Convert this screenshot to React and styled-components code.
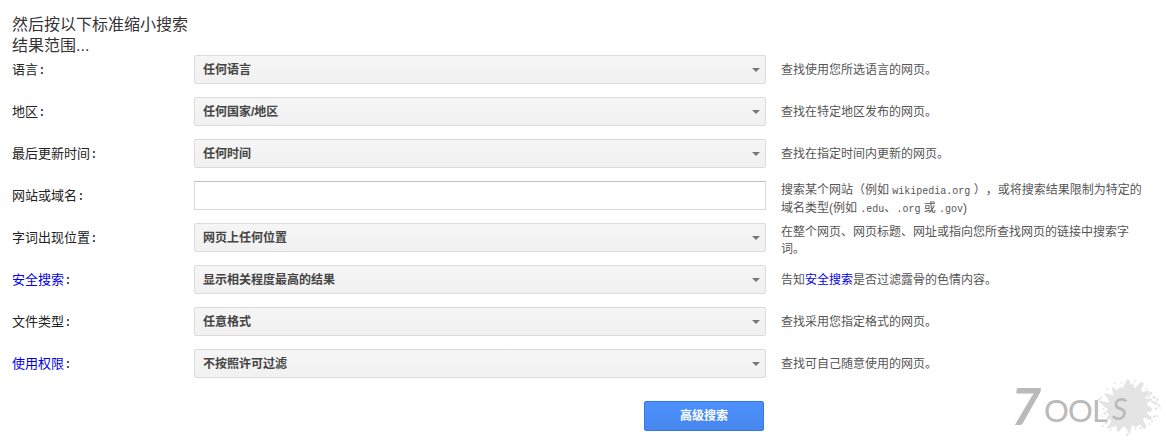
import React from 'react';
import styled, { createGlobalStyle } from 'styled-components';

const GlobalStyle = createGlobalStyle`
    * {
        box-sizing: border-box;
    }
    body {
        margin: 0;
        background: #fff;
        color: #222;
        font-family: 'Liberation Sans', 'Noto Sans CJK SC', sans-serif;
        font-size: 13px;
        text-spacing-trim: space-all;
    }
    a {
        color: #00e;
        text-decoration: none;
    }
`;

const Page = styled.main`
    position: relative;
    min-height: 100vh;
    padding: 14px 16px 8px 12px;
`;

const Heading = styled.h1`
    width: 182px;
    margin: 0;
    font-size: 16px;
    font-weight: 400;
    line-height: 21px;
    color: #333;
`;

const Row = styled.div`
    display: grid;
    grid-template-columns: 182px minmax(0, 572px) minmax(0, 1fr);
    align-items: start;
    min-height: 42px;
`;

const Form = styled.form`
    margin-top: -1px;
`;

const Label = styled.label`
    line-height: 29px;
    color: #222;
`;

const Colon = styled.span`
    font-family: 'Liberation Mono', monospace;
`;

const Help = styled.p`
    display: flex;
    align-items: center;
    min-height: 30px;
    margin: 0;
    padding: 1px 0 0 15px;
    font-size: 12px;
    line-height: 17px;
    color: #555;
`;

const Mono = styled.span`
    font-family: 'Liberation Mono', monospace;
    font-size: 10px;
`;

const SelectWrap = styled.div`
    display: grid;
    align-items: center;

    & > * {
        grid-area: 1 / 1;
    }
`;

const Select = styled.select`
    appearance: none;
    width: 100%;
    height: 29px;
    padding: 0 24px 0 8px;
    border: 1px solid #dcdcdc;
    border-radius: 2px;
    background: linear-gradient(#f5f5f5, #f1f1f1);
    color: #444;
    font-family: inherit;
    font-size: 12px;
    font-weight: 700;
`;

const Arrow = styled.svg`
    justify-self: end;
    width: 8px;
    height: 4px;
    margin-right: 6px;
    fill: #777;
    pointer-events: none;
`;

const TextInput = styled.input`
    width: 100%;
    height: 29px;
    padding: 1px 8px;
    border: 1px solid #d9d9d9;
    border-top-color: #c0c0c0;
    border-radius: 1px;
    font-family: inherit;
    font-size: 13px;
`;

const Actions = styled(Row)`
    padding-top: 10px;
`;

const Submit = styled.button`
    grid-column: 2;
    justify-self: end;
    width: 120px;
    height: 30px;
    margin-right: 2px;
    padding: 0;
    border: 1px solid #3079ed;
    border-radius: 2px;
    background: linear-gradient(#4d90fe, #4787ed);
    color: #fff;
    font-family: inherit;
    font-size: 12px;
    font-weight: 700;
    line-height: 28px;
    cursor: pointer;
`;

const Watermark = styled.svg`
    position: absolute;
    right: 0;
    bottom: 0;
    width: 160px;
    height: 72px;
    pointer-events: none;
`;

const fields = [
    { id: 'lang', label: '语言', value: '任何语言', help: '查找使用您所选语言的网页。' },
    { id: 'region', label: '地区', value: '任何国家/地区', help: '查找在特定地区发布的网页。' },
    { id: 'updated', label: '最后更新时间', value: '任何时间', help: '查找在指定时间内更新的网页。' },
    {
        id: 'site',
        label: '网站或域名',
        help: (
            <>
                搜索某个网站（例如 <Mono>wikipedia.org</Mono> ），或将搜索结果限制为特定的域名类型(例如 <Mono>.edu</Mono>、
                <Mono>.org</Mono> 或 <Mono>.gov</Mono>)
            </>
        ),
    },
    {
        id: 'place',
        label: '字词出现位置',
        value: '网页上任何位置',
        help: '在整个网页、网页标题、网址或指向您所查找网页的链接中搜索字词。',
    },
    {
        id: 'safe',
        label: '安全搜索',
        link: true,
        value: '显示相关程度最高的结果',
        help: (
            <>
                告知<a href="#safe">安全搜索</a>是否过滤露骨的色情内容。
            </>
        ),
    },
    { id: 'filetype', label: '文件类型', value: '任意格式', help: '查找采用您指定格式的网页。' },
    { id: 'rights', label: '使用权限', link: true, value: '不按照许可过滤', help: '查找可自己随意使用的网页。' },
];

const drops = [
    [182, 52, 5], [176, 60, 4], [192, 64, 5], [201, 72, 4], [196, 82, 5], [206, 88, 4], [211, 96, 2],
    [198, 98, 4], [188, 78, 4], [182, 72, 4], [204, 66, 2], [170, 38, 3], [192, 122, 4], [200, 120, 3],
    [196, 132, 2], [186, 134, 3], [178, 144, 3], [40, 98, 3], [44, 112, 4], [36, 120, 3], [48, 142, 4],
    [40, 150, 3], [74, 22, 3], [94, 20, 3], [134, 16, 3], [52, 40, 3], [34, 62, 3], [28, 70, 4],
    [62, 162, 3], [112, 176, 4], [136, 158, 3], [152, 156, 4], [164, 156, 3],
];

const Field = ({ id, label, link, value, help }) => (
    <Row>
        <Label htmlFor={id}>
            {link ? <a href={`#${id}`}>{label}</a> : label}
            <Colon>:</Colon>
        </Label>
        {value ? (
            <SelectWrap>
                <Select id={id} name={id}>
                    <option>{value}</option>
                </Select>
                <Arrow viewBox="0 0 8 4">
                    <path d="M0 0h8L4 4z" />
                </Arrow>
            </SelectWrap>
        ) : (
            <TextInput id={id} name={id} type="text" />
        )}
        <Help>
            <span>{help}</span>
        </Help>
    </Row>
);

const Logo = () => (
    <Watermark viewBox="0 0 160 72" role="img" aria-label="7ools">
        <g fill="#e4e4e4" transform="translate(84 7) scale(.3333)">
            <path
                stroke="#e4e4e4"
                strokeWidth="5"
                strokeLinejoin="round"
                d="M92 36l9 2 6-13 6-13 5 5-1 16 10-8 5 15 8-5 14-15 5 4-9 17 7 10 18-5-3 9-11 10 5 6 17-2-15 12 3 10 14 8-3 6-17 2 3 5 16 14-5 4-17-9-6 9 3 7 8 15-7 2-12-14-8 11-7-2-7-7-5 12-3 16-6-12-9-10-9 5-8 12-4-4 3-12-12-1-20 8 10-14 4-10-16-6 9-9-9-11 8-8-15-8-14-13 16 3 17 2-5-12-12-16 14 4 14 5-3-13-3-14 13 10 5-6z"
            />
            {drops.map(([x, y, r]) => (
                <circle key={`${x}-${y}`} cx={x} cy={y} r={r} />
            ))}
        </g>
        <g fill="#bababa" fontFamily="Lato, sans-serif">
            <text x="5" y="56" fontSize="52" fontWeight="700" fontStyle="italic">
                7
            </text>
            <text y="53" fontSize="31">
                <tspan x="38">O</tspan>
                <tspan x="62">O</tspan>
                <tspan x="86">L</tspan>
            </text>
            <text x="106" y="51" fontSize="30" fontStyle="italic">
                S
            </text>
        </g>
    </Watermark>
);

const App = () => (
    <>
        <GlobalStyle />
        <Page>
            <Heading>然后按以下标准缩小搜索结果范围...</Heading>
            <Form onSubmit={e => e.preventDefault()}>
                {fields.map(field => (
                    <Field key={field.id} {...field} />
                ))}
                <Actions>
                    <Submit type="submit">高级搜索</Submit>
                </Actions>
            </Form>
            <Logo />
        </Page>
    </>
);

export default App;
